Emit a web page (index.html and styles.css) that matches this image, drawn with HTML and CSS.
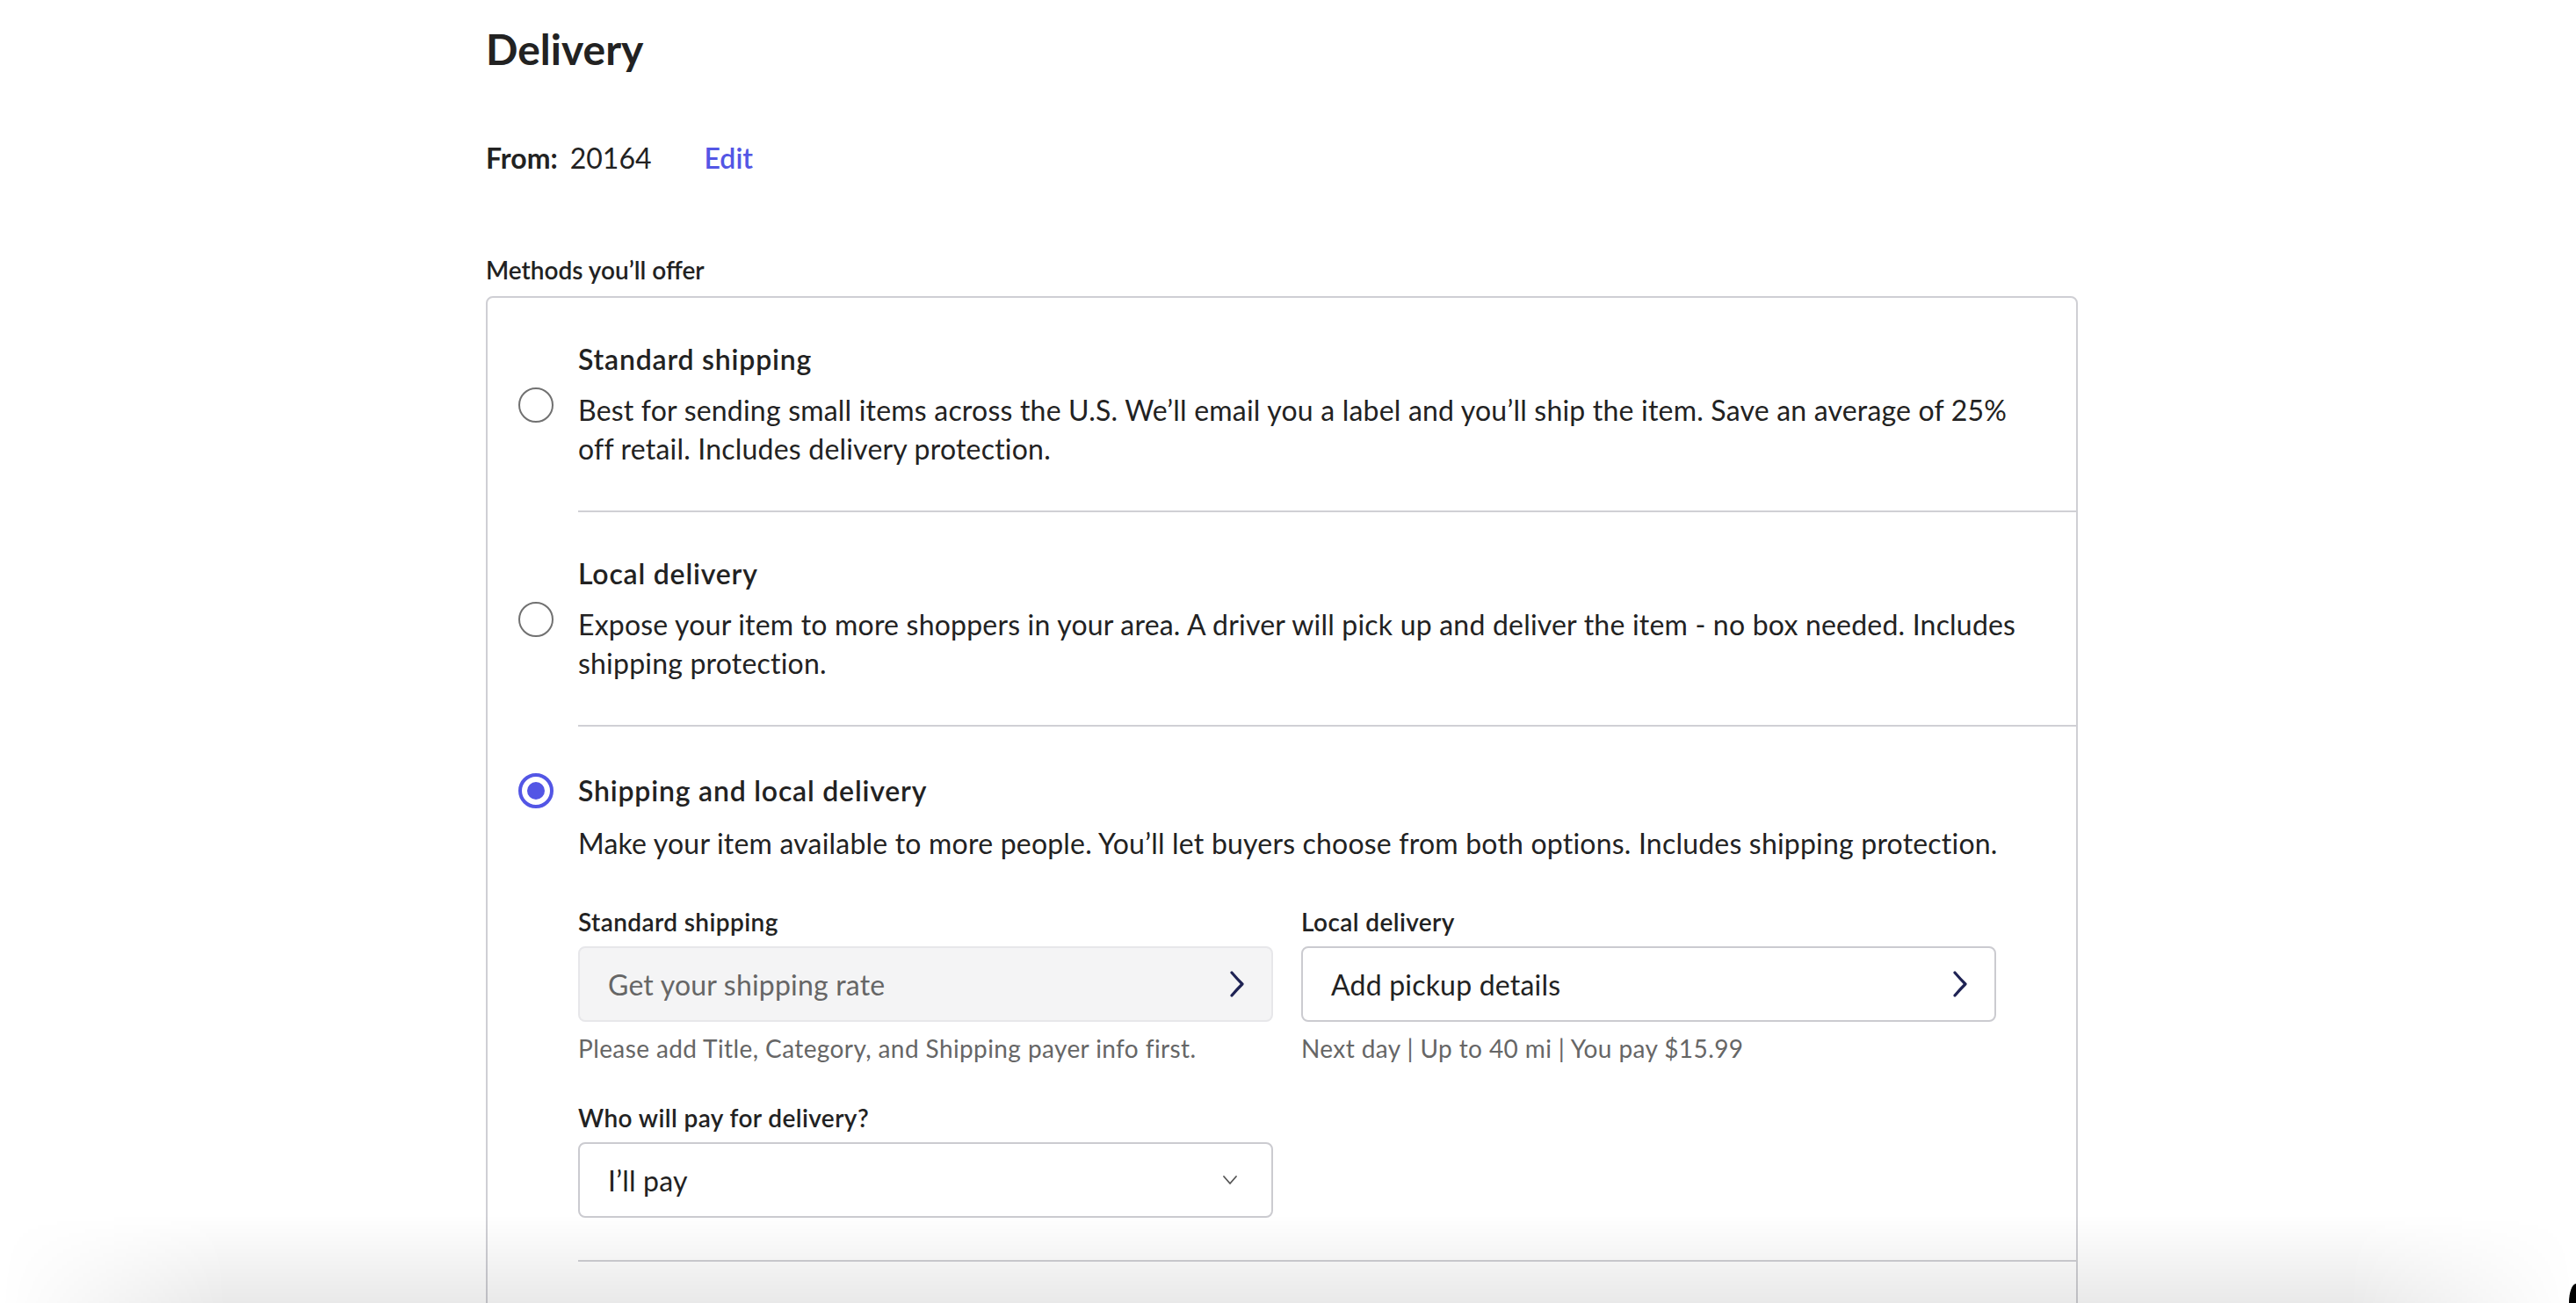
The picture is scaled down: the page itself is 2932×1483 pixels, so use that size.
FILE: index.html
```html
<!DOCTYPE html>
<html lang="en">
<head>
<meta charset="utf-8">
<title>Delivery</title>
<link rel="stylesheet" href="styles.css">
</head>
<body>
<div class="page">
  <main class="content">
    <h1 class="title">Delivery</h1>
    <div class="from">
      <span class="from-label">From:</span>
      <span class="from-zip">20164</span>
      <a class="edit" href="#">Edit</a>
    </div>
    <div class="methods-label">Methods you’ll offer</div>
    <div class="card">
      <div class="option">
        <span class="radio"></span>
        <div class="option-body">
          <div class="option-title">Standard shipping</div>
          <p class="option-desc">Best for sending small items across the U.S. We’ll email you a label and you’ll ship the item. Save an average of 25% off retail. Includes delivery protection.</p>
        </div>
      </div>
      <div class="option">
        <span class="radio"></span>
        <div class="option-body">
          <div class="option-title">Local delivery</div>
          <p class="option-desc">Expose your item to more shoppers in your area. A driver will pick up and deliver the item - no box needed. Includes shipping protection.</p>
        </div>
      </div>
      <div class="option option-expanded">
        <span class="radio radio-on"></span>
        <div class="option-body">
          <div class="option-title">Shipping and local delivery</div>
          <p class="option-desc">Make your item available to more people. You’ll let buyers choose from both options. Includes shipping protection.</p>
          <div class="fields">
            <div class="field">
              <div class="field-label">Standard shipping</div>
              <div class="box box-disabled">
                <span>Get your shipping rate</span>
                <svg class="chev" width="18" height="30" viewBox="0 0 18 30"><path d="M3 2 Q9 9 15 15 Q9 21 3 28" fill="none" stroke="#1f2354" stroke-width="3.2" stroke-linecap="round" stroke-linejoin="round"/></svg>
              </div>
              <div class="helper">Please add Title, Category, and Shipping payer info first.</div>
            </div>
            <div class="field">
              <div class="field-label">Local delivery</div>
              <div class="box">
                <span>Add pickup details</span>
                <svg class="chev" width="18" height="30" viewBox="0 0 18 30"><path d="M3 2 Q9 9 15 15 Q9 21 3 28" fill="none" stroke="#1f2354" stroke-width="3.2" stroke-linecap="round" stroke-linejoin="round"/></svg>
              </div>
              <div class="helper">Next day | Up to 40 mi | You pay $15.99</div>
            </div>
            <div class="field">
              <div class="field-label">Who will pay for delivery?</div>
              <div class="box select">
                <span>I’ll pay</span>
                <svg class="caret" width="18" height="12" viewBox="0 0 18 12"><path d="M2 2 L9 10 L16 2" fill="none" stroke="#555" stroke-width="1.8" stroke-linecap="round" stroke-linejoin="round"/></svg>
              </div>
            </div>
          </div>
        </div>
      </div>
      <div class="card-rest"></div>
    </div>
  </main>
</div>
<div class="shade"></div>
<div class="corner"></div>
</body>
</html>
```
FILE: styles.css
```css
html, body {
  margin: 0;
  background: #fff;
}
body {
  font-family: Lato, "Liberation Sans", sans-serif;
  color: #222;
  overflow: hidden;
}
.page {
  display: flex;
  justify-content: center;
  padding-right: 14px;
}
.content {
  width: 1812px;
}
.title {
  margin: 27px 0 0;
  font-size: 48px;
  line-height: 58px;
  font-weight: 700;
}
.from {
  margin-top: 73px;
  display: flex;
  align-items: center;
  height: 44px;
  font-size: 32px;
  line-height: 44px;
}
.from-label {
  font-weight: 700;
  margin-right: 14px;
}
.edit {
  margin-left: 60px;
  color: #5356e5;
  font-weight: 600;
  text-decoration: none;
}
.methods-label {
  margin-top: 87px;
  font-size: 28px;
  line-height: 36px;
  font-weight: 600;
}
.card {
  margin-top: 12px;
  border: 2px solid #cfcfd4;
  border-radius: 8px;
  padding-left: 35px;
}
.option {
  display: flex;
  align-items: center;
  gap: 28px;
}
.option-expanded {
  align-items: flex-start;
}
.radio {
  flex: none;
  box-sizing: border-box;
  width: 40px;
  height: 40px;
  border-radius: 50%;
  border: 2.5px solid #717171;
}
.radio-on {
  border: 4px solid #5356e5;
  display: flex;
  align-items: center;
  justify-content: center;
}
.radio-on::after {
  content: "";
  width: 20px;
  height: 20px;
  border-radius: 50%;
  background: #5356e5;
}
.option-expanded .radio {
  margin-top: 53px;
}
.option-body {
  flex: 1;
  min-width: 0;
  padding: 48px 51px 48px 0;
  border-bottom: 2px solid #d0d0d5;
}
.option-expanded .option-body {
  padding-top: 51px;
}
.option-title {
  font-size: 32px;
  line-height: 44px;
  font-weight: 600;
  letter-spacing: 0.8px;
}
.option-desc {
  margin: 14px 0 0;
  font-size: 32px;
  line-height: 44px;
  letter-spacing: 0.2px;
}
.option-expanded .option-desc {
  margin-top: 16px;
}
.fields {
  margin-top: 49px;
  display: grid;
  grid-template-columns: 791px 791px;
  column-gap: 32px;
  row-gap: 43px;
}
.field-label {
  font-size: 28px;
  line-height: 36px;
  font-weight: 600;
  letter-spacing: 0.4px;
  margin-bottom: 10px;
}
.box {
  box-sizing: border-box;
  height: 86px;
  border: 2px solid #cbcbd0;
  border-radius: 8px;
  padding: 0 30px 0 32px;
  display: flex;
  align-items: center;
  justify-content: space-between;
  font-size: 32px;
  letter-spacing: 0.2px;
  color: #222;
}
.box-disabled {
  background: #f4f4f5;
  border-color: #e7e7ea;
  color: #666;
}
.select {
  padding-right: 38px;
}
.helper {
  margin-top: 12px;
  font-size: 28px;
  line-height: 36px;
  letter-spacing: 0.4px;
  color: #666;
}
.card-rest {
  height: 140px;
}
.shade {
  position: fixed;
  left: 0;
  right: 0;
  bottom: 0;
  height: 100px;
  pointer-events: none;
  background: linear-gradient(to bottom, rgba(0,0,0,0), rgba(0,0,0,0.085));
  -webkit-mask-image: linear-gradient(to right, transparent 0, #000 260px, #000 calc(100% - 260px), transparent 100%);
  mask-image: linear-gradient(to right, transparent 0, #000 260px, #000 calc(100% - 260px), transparent 100%);
}
.corner {
  position: fixed;
  right: 0;
  bottom: 0;
  width: 8px;
  height: 22px;
  background: #000;
  border-top-left-radius: 8px 22px;
}
```
